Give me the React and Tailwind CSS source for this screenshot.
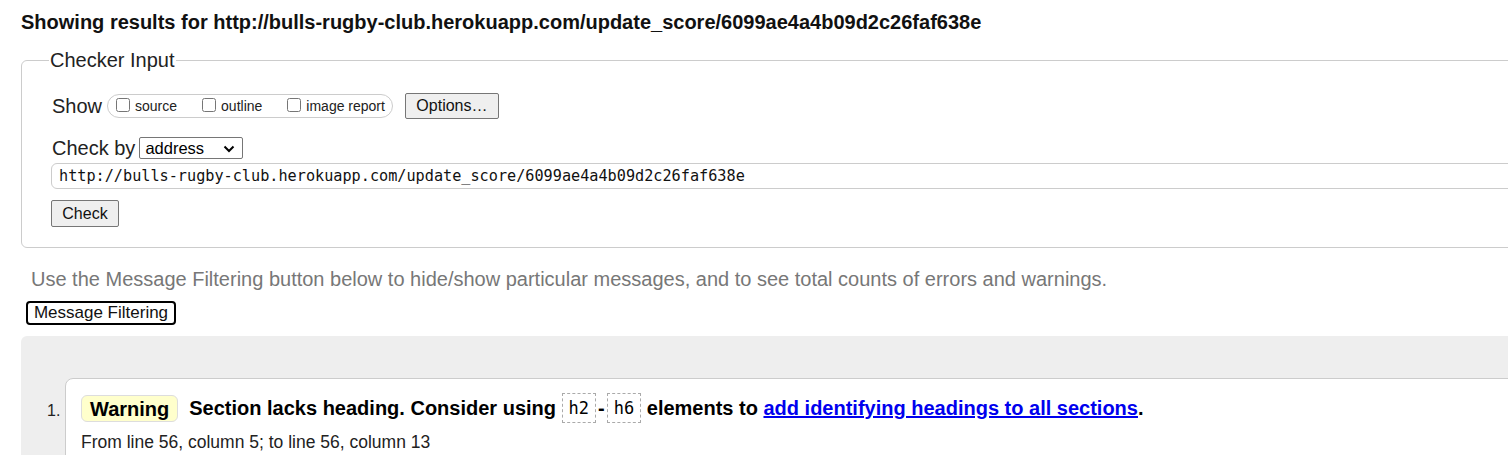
import React from 'react';

const url = 'http://bulls-rugby-club.herokuapp.com/update_score/6099ae4a4b09d2c26faf638e';

function Code({ children }) {
  return (
    <code className="inline-block border border-dashed border-[#aaa] px-[6px] leading-[28px] font-['DejaVu_Sans_Mono',monospace] font-normal text-[17px] align-middle">
      {children}
    </code>
  );
}

export default function App() {
  return (
    <div className="w-full overflow-hidden bg-white font-['Liberation_Sans',Arial,sans-serif] text-black">
      <div className="w-[1600px] pl-[21px]">
        {/* Title */}
        <h1 className="pt-[11px] text-[20px] leading-[23px] font-bold text-[#111]">
          Showing results for {url}
        </h1>

        {/* Checker Input */}
        <fieldset className="mt-[15px] border border-[#ccc] rounded-[6px] pl-[30px] pb-[20px]">
          <legend className="ml-[-3px] px-[1px] text-[20px] leading-[23px] text-[#222]">Checker Input</legend>

          <div className="flex items-center mt-[21px] h-[26px]">
            <span className="text-[20px] text-[#222] mr-[5px]">Show</span>
            <div className="flex items-center h-[24px] border border-[#ccc] rounded-[12px] pl-[8px] pr-[7px] text-[14px] text-[#222]">
              <label className="flex items-center mr-[25px]">
                <input type="checkbox" className="w-[14px] h-[14px] mr-[5px] -mt-[3px]" />
                source
              </label>
              <label className="flex items-center mr-[25px]">
                <input type="checkbox" className="w-[14px] h-[14px] mr-[5px] -mt-[3px]" />
                outline
              </label>
              <label className="flex items-center">
                <input type="checkbox" className="w-[14px] h-[14px] mr-[5px] -mt-[3px]" />
                image report
              </label>
            </div>
            <button className="ml-[12px] h-[26px] w-[94px] bg-[#efefef] border border-[#767676] rounded-[2px] text-[16px] text-[#111]">
              Options…
            </button>
          </div>

          <div className="flex items-center mt-[18px] h-[22px]">
            <span className="text-[20px] text-[#222] mr-[4px]">Check by</span>
            <div className="relative h-[22px] w-[104px] border border-[#767676] rounded-[2px] flex items-center pl-[5px] text-[16.5px]">
              address
              <svg className="absolute right-[7px] top-[7px]" width="12" height="8" viewBox="0 0 12 8">
                <path d="M1.5 1.5 L6 6 L10.5 1.5" fill="none" stroke="#000" strokeWidth="2" />
              </svg>
            </div>
          </div>

          <div className="mt-[4px] -ml-[1px] h-[26px] border border-[#ccc] rounded-[6px] flex items-center pl-[7px] font-['DejaVu_Sans_Mono',monospace] text-[15.2px] text-[#111]">
            {url}
          </div>

          <button className="mt-[11px] -ml-[1px] h-[27px] w-[68px] bg-[#efefef] border border-[#767676] rounded-[2px] text-[16px] text-[#111]">
            Check
          </button>
        </fieldset>

        {/* Filtering hint */}
        <p className="mt-[20px] pl-[10px] text-[20px] leading-[23px] text-[#777]">
          Use the Message Filtering button below to hide/show particular messages, and to see total counts of errors and warnings.
        </p>
        <button className="mt-[10px] ml-[5px] h-[24px] w-[150px] bg-white border-2 border-black rounded-[4px] text-[17px] leading-[18px] text-[#111]">
          Message Filtering
        </button>

        {/* Results */}
        <div className="mt-[11px] bg-[#eee] rounded-tl-[6px] pt-[42px]">
          <ol className="flex">
            <li className="flex">
              <span className="w-[44px] pt-[21px] pl-[26px] text-[16px] text-[#222]">1.</span>
              <div className="w-[1500px] bg-white border border-[#ccc] rounded-tl-[8px] pl-[15px] pt-[14px] pb-[6px]">
                <p className="flex items-center text-[20px] font-bold leading-[28px]">
                  <span className="inline-block bg-[#ffc] border border-[#ddd] rounded-[6px] px-[8px] h-[27px] leading-[26px] mr-[11px]">Warning</span>
                  <span>Section lacks heading. Consider using&nbsp;</span>
                  <Code>h2</Code>
                  <span className="mx-[2px]">-</span>
                  <Code>h6</Code>
                  <span>&nbsp;elements to&nbsp;</span>
                  <a href="#" className="text-[#00e] underline">add identifying headings to all sections</a>
                  <span>.</span>
                </p>
                <p className="mt-[8px] text-[17.5px] leading-[22px] text-[#222]">From line 56, column 5; to line 56, column 13</p>
              </div>
            </li>
          </ol>
        </div>
      </div>
    </div>
  );
}
